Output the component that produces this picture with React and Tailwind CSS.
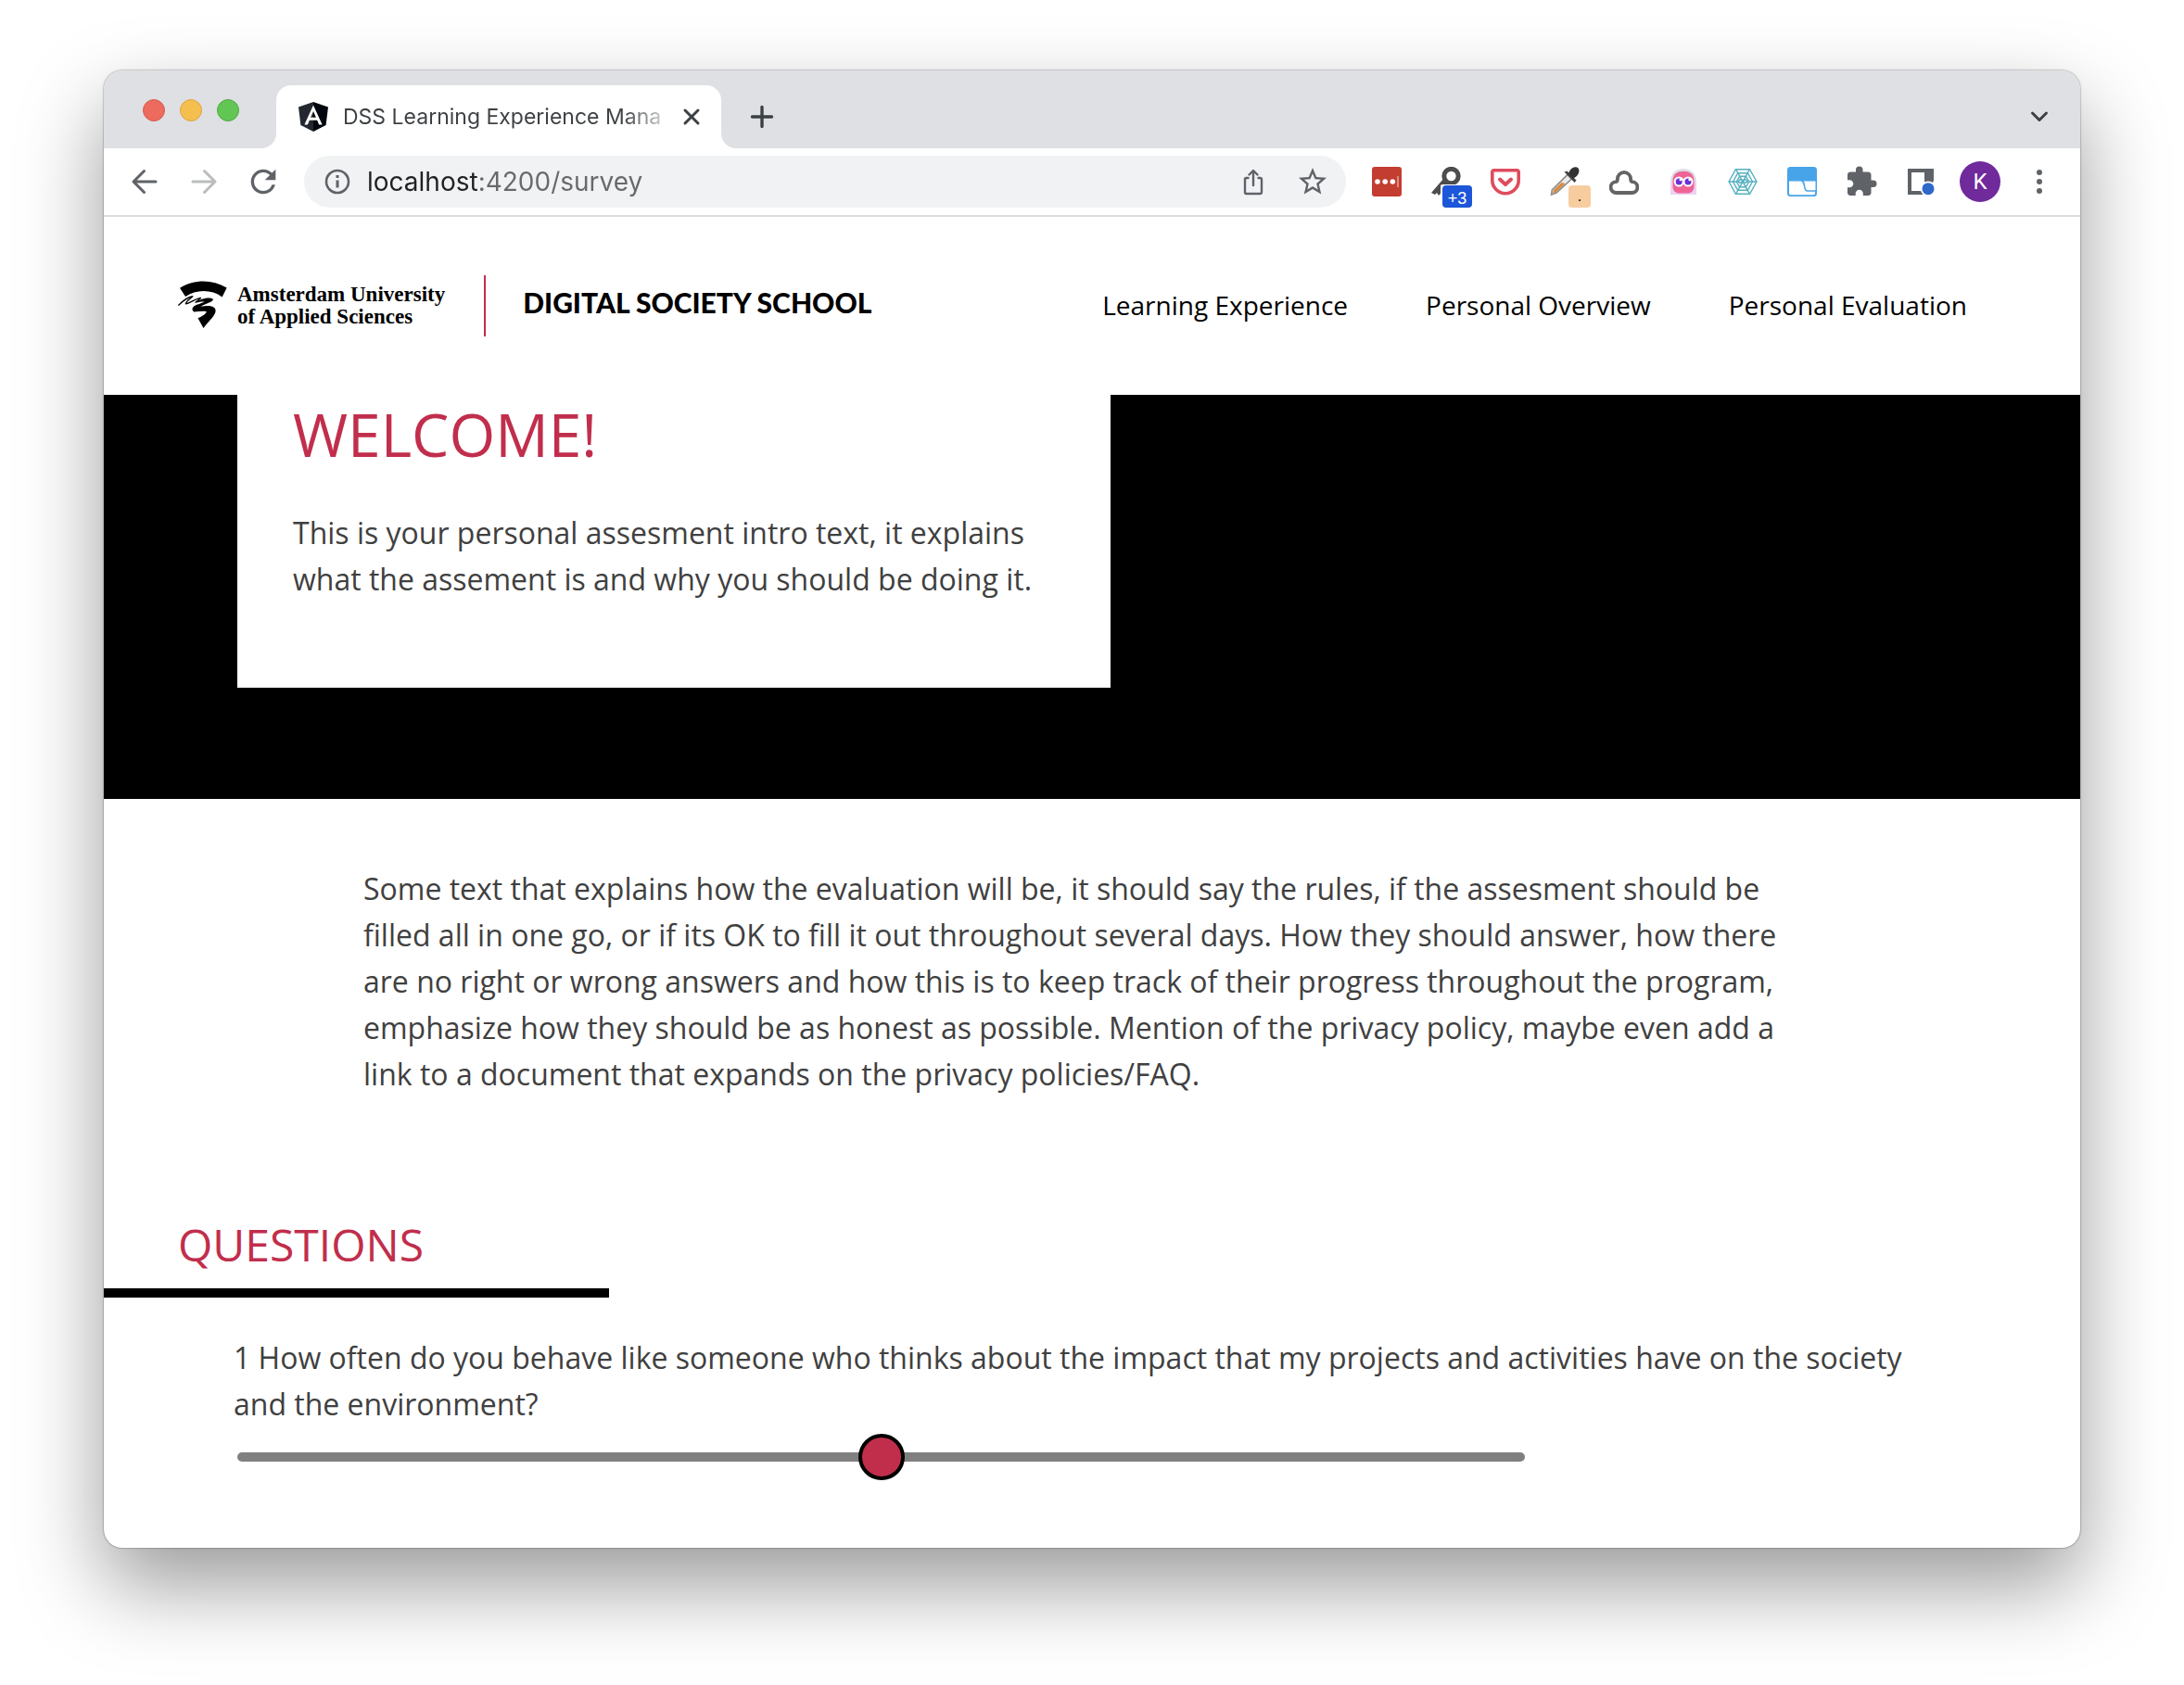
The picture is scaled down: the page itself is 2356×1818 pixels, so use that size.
import { MdExtension, MdRefresh, MdStarBorder } from "react-icons/md";

const line = {
  fill: "none",
  stroke: "currentColor",
  strokeWidth: 3,
  strokeLinecap: "round",
  strokeLinejoin: "round",
};

function Glyph({ children, className = "size-8" }) {
  return (
    <svg viewBox="0 0 32 32" className={className} aria-hidden="true">
      {children}
    </svg>
  );
}

function IconButton({ label, className = "text-[#5f6368]", children }) {
  return (
    <button
      type="button"
      aria-label={label}
      className={`relative flex h-14 w-16 shrink-0 items-center justify-center ${className}`}
    >
      {children}
    </button>
  );
}

function AngularShield() {
  return (
    <svg viewBox="25 30 200 200" className="size-8 shrink-0" aria-hidden="true">
      <path d="M125 30 25 64l15 122 85 44z" fill="#23272f" />
      <path d="M125 30l100 34-15 122-85 44z" fill="#02060e" />
      <path
        d="M125 52 65 183h22l12-30h52l12 30h22zm18 83h-36l18-42z"
        fill="#fff"
      />
    </svg>
  );
}

function TabStrip() {
  return (
    <div className="flex h-[84px] items-end bg-[#dfe0e4]">
      <div className="flex h-[82px] w-[170px] shrink-0 items-center gap-4 pl-[42px]">
        <button type="button" aria-label="Close window" className="size-6 rounded-full border border-[#d55a4f] bg-[#ed6a5f]" />
        <button type="button" aria-label="Minimize window" className="size-6 rounded-full border border-[#dca443] bg-[#f5bf4f]" />
        <button type="button" aria-label="Zoom window" className="size-6 rounded-full border border-[#52a842] bg-[#62c655]" />
      </div>
      <div className="size-4 shrink-0 bg-white">
        <div className="size-4 rounded-br-full bg-[#dfe0e4]" />
      </div>
      <div className="flex h-[68px] w-[480px] items-center rounded-t-2xl bg-white pl-6 pr-4">
        <AngularShield />
        <span className="ml-4 flex-1 whitespace-nowrap bg-[linear-gradient(90deg,#3c4043_84%,transparent)] bg-clip-text font-[Inter,sans-serif] text-[23px] text-transparent">
          DSS Learning Experience Mana
        </span>
        <button type="button" aria-label="Close tab" className="size-8 text-[#3c4043]">
          <Glyph>
            <path d="M9 9l14 14M23 9L9 23" {...line} />
          </Glyph>
        </button>
      </div>
      <div className="size-4 shrink-0 bg-white">
        <div className="size-4 rounded-bl-full bg-[#dfe0e4]" />
      </div>
      <button type="button" aria-label="New tab" className="mb-[18px] ml-3 size-8 text-[#3c4043]">
        <Glyph>
          <path d="M16 5.500v21M5.500 16h21" {...line} strokeWidth={3.4} />
        </Glyph>
      </button>
      <button type="button" aria-label="Search tabs" className="mb-[18px] ml-auto mr-7 size-8 text-[#3c4043]">
        <Glyph>
          <path d="M8.500 12l7.500 7.500 7.500-7.500" {...line} />
        </Glyph>
      </button>
    </div>
  );
}

function Extensions() {
  return (
    <div className="flex shrink-0">
      <IconButton label="Password manager">
        <Glyph>
          <rect width="32" height="32" rx="3" fill="#c33d31" />
          <circle cx="6" cy="16" r="2.800" fill="#fff" />
          <circle cx="14.200" cy="16" r="2.800" fill="#fff" />
          <circle cx="22.300" cy="16" r="2.800" fill="#fff" />
          <path d="M28 10v12" stroke="#e3a49e" strokeWidth="1.500" />
        </Glyph>
      </IconButton>
      <IconButton label="Key finder, 3 new">
        <Glyph>
          <circle cx="21.500" cy="10" r="7.700" fill="none" stroke="#4d4d4d" strokeWidth="5" />
          <path d="M13 13l6 6L8 31l-2-3-2 2-4-2z" fill="#4d4d4d" />
          <path d="M10 32V21a2 2 0 0 1 2-2h20v13z" fill="#fff" />
        </Glyph>
        <span className="absolute left-7 top-8 h-6 w-8 rounded bg-[#1c56d9] text-center font-['Liberation_Sans',sans-serif] text-lg leading-7 text-white">
          +3
        </span>
      </IconButton>
      <IconButton label="Save to Pocket">
        <Glyph>
          <path
            d="M3.500 3.800h25a1.700 1.700 0 0 1 1.700 1.700v9a14.200 14.200 0 0 1-28.400 0v-9a1.700 1.700 0 0 1 1.700-1.700z"
            fill="none" stroke="#de4c5c" strokeWidth="3.600"
          />
          <path d="M10 13.500l6 5.500 6-5.500" fill="none" stroke="#de4c5c" strokeWidth="4" strokeLinecap="round" strokeLinejoin="round" />
        </Glyph>
      </IconButton>
      <IconButton label="Color picker">
        <Glyph>
          <path d="M19 8.500l4.500 4.500L7 28l-5.500 2 .8-5z" fill="#e9e9e9" stroke="#8b8b8b" strokeWidth="1.600" />
          <path d="M12.500 17l4 1L6.500 27.500l-3.500 1 1-3.500z" fill="#d98a3c" />
          <path d="M15.500 5.500l3-1 10 10-2 2.500z" fill="#444" />
          <path d="M20 7c2-5 5-7.500 9-6.500 3 1 3 5 1 8-1.500 2-3 3.500-5.500 4z" fill="#333" />
        </Glyph>
        <span className="absolute left-9 top-8 size-6 rounded bg-[#f7cda0] text-center font-['Liberation_Sans',sans-serif] text-base leading-6 text-black">
          .
        </span>
      </IconButton>
      <IconButton label="Cloud">
        <Glyph>
          <path
            d="M7.800 28a5.900 5.900 0 0 1-.6-11.800c1.200-.2 1.700-1.200 1.700-3.200a7.100 7.100 0 0 1 14.200 0c0 2 .5 3 1.700 3.200a5.900 5.900 0 0 1-.6 11.800z"
            fill="none" stroke="#646464" strokeWidth="3.800"
          />
        </Glyph>
      </IconButton>
      <IconButton label="Ghost">
        <Glyph>
          <path d="M2 30V16C2 7 8 2 16 2s14 5 14 14v14z" fill="#dcdfe6" />
          <path d="M2 16h28v10a4 4 0 0 1-4 4H6a4 4 0 0 1-4-4z" fill="#efd0f3" />
          <path d="M4.500 15C4.500 8 9 4.800 16 4.800S27.500 8 27.500 15v7a6.500 6.500 0 0 1-6.500 6.500H11A6.500 6.500 0 0 1 4.500 22z" fill="#ee6496" />
          <circle cx="11.200" cy="16" r="5.500" fill="#fff" />
          <circle cx="21" cy="16" r="5.500" fill="#fff" />
          <circle cx="11.200" cy="16" r="3.500" fill="#6d2fd6" />
          <circle cx="21" cy="16" r="3.500" fill="#6d2fd6" />
          <circle cx="13" cy="13.800" r="1.500" fill="#fff" />
          <circle cx="22.800" cy="13.800" r="1.500" fill="#fff" />
        </Glyph>
      </IconButton>
      <IconButton label="Web">
        <Glyph>
          <g fill="none" stroke="#55b0bf" strokeWidth="1.400" strokeLinejoin="round">
            <path d="M8.500 2.700h15L31 16l-7.500 13.300h-15L1 16z" />
            <path d="M10.700 6.700h10.600l5.200 9.300-5.200 9.300H10.700L5.500 16z" />
            <path d="M12.500 10.300h7l3.300 5.700-3.300 5.700h-7L9.200 16z" />
            <path d="M8.500 2.700l15 26.600M23.500 2.700l-15 26.600M1 16h11M20 16h11" />
            <circle cx="13.500" cy="15.500" r="1.800" />
            <circle cx="18.500" cy="15.500" r="1.800" />
          </g>
        </Glyph>
      </IconButton>
      <IconButton label="Split window">
        <Glyph>
          <rect width="32" height="32" rx="3.500" fill="#48a4e8" />
          <path d="M2 15.500h12.500c4 0 2.500 10.500 6.500 11.300h9V28.500a1.800 1.800 0 0 1-1.800 1.800H3.800A1.800 1.800 0 0 1 2 28.500z" fill="#fff" />
          <path d="M17.500 15.500H30.500v9.800h-8.300c-3.700 0-2.200-7.500-4.700-9.800z" fill="#fff" />
        </Glyph>
      </IconButton>
      <IconButton label="Extensions">
        <MdExtension className="size-9" />
      </IconButton>
      <IconButton label="Side panel">
        <Glyph>
          <path d="M2 2h28v28H2z" fill="#5f6368" />
          <path d="M6 6h14v20H6z" fill="#fff" />
          <circle cx="24" cy="23.700" r="8.200" fill="#fff" />
          <path d="M30 15h2v17H20v-2z" fill="#fff" />
          <circle cx="24" cy="23.700" r="6.500" fill="#2e68cb" />
        </Glyph>
      </IconButton>
      <IconButton label="Profile K">
        <span className="flex size-11 items-center justify-center rounded-full bg-[#702a9c] font-[Roboto,sans-serif] text-2xl text-white">
          K
        </span>
      </IconButton>
      <IconButton label="Menu">
        <Glyph>
          <circle cx="16" cy="6" r="3" fill="currentColor" />
          <circle cx="16" cy="16" r="3" fill="currentColor" />
          <circle cx="16" cy="26" r="3" fill="currentColor" />
        </Glyph>
      </IconButton>
    </div>
  );
}

function Toolbar() {
  return (
    <div className="flex h-[74px] items-center border-b-2 border-[#dcdcde] bg-white px-3">
      <IconButton label="Back">
        <Glyph>
          <path d="M28 16H5M15.500 4.500L4 16l11.500 11.500" {...line} />
        </Glyph>
      </IconButton>
      <IconButton label="Forward" className="text-[#babcbe]">
        <Glyph>
          <path d="M4 16h23M16.500 4.500L28 16 16.500 27.500" {...line} />
        </Glyph>
      </IconButton>
      <IconButton label="Reload">
        <MdRefresh className="size-10" />
      </IconButton>
      <div className="mx-3 flex h-14 min-w-0 flex-1 items-center rounded-full bg-[#f1f2f4] pl-5 pr-1">
        <Glyph className="size-8 shrink-0 text-[#5f6368]">
          <circle cx="16" cy="16" r="12" {...line} strokeWidth={2.6} />
          <path d="M16 14.500v8M16 9v3" stroke="currentColor" strokeWidth="3" />
        </Glyph>
        <input
          type="text"
          aria-label="Address"
          defaultValue="localhost:4200/survey"
          className="ml-4 min-w-0 flex-1 bg-[linear-gradient(90deg,#202124_120px,#67696c_120px)] bg-clip-text font-[Inter,sans-serif] text-[28px] text-transparent outline-none"
        />
        <IconButton label="Share">
          <Glyph>
            <path d="M10.500 12H8.500a1.500 1.500 0 0 0-1.500 1.500v14A1.500 1.500 0 0 0 8.500 29h15a1.500 1.500 0 0 0 1.500-1.500v-14a1.500 1.500 0 0 0-1.500-1.500h-2M16 20V4.500M11.500 8.500L16 4l4.500 4.500" {...line} strokeWidth={2.4} />
          </Glyph>
        </IconButton>
        <IconButton label="Bookmark">
          <MdStarBorder className="size-9" />
        </IconButton>
      </div>
      <Extensions />
    </div>
  );
}

function UniversityMark() {
  return (
    <svg viewBox="38 36 158 152" className="h-[51px] w-[53px] shrink-0" aria-hidden="true">
      <path d="M44 59C90 30 148 30 195 58l-15 30C146 63 96 63 62 87z" />
      <path
        d="M39 115c14-14 28-26 46-29-8 8-22 16-22 24 16-2 28-16 48-19-4 6-12 9-16 14"
        fill="none" stroke="#000" strokeWidth="4" strokeLinejoin="round"
      />
      <path d="M90 108c18-14 48-22 61-13 2 9-24 13-40 24 24-5 48-3 48 13 0 16-22 32-39 56l-18-32c14-6 26-14 28-21-12-3-26 0-40 1-12-8-4-18 8-23 12-4 20-7 26-10-10-1-22 1-34 5z" />
    </svg>
  );
}

function SiteHeader() {
  return (
    <header className="flex h-48 items-center bg-white pl-20 pr-[122px] text-black">
      <a href="#university" className="flex items-center gap-[11px] pb-1">
        <UniversityMark />
        <span className="whitespace-nowrap pt-1 font-['Liberation_Serif',serif] text-[23px] font-bold leading-6">
          Amsterdam University
          <br />
          of Applied Sciences
        </span>
      </a>
      <div className="ml-[42px] h-[66px] w-0.5 shrink-0 bg-[#c12e4c]" />
      <a href="#school" className="ml-10 whitespace-nowrap pb-2 font-[Lato,sans-serif] text-[30px] font-black">
        DIGITAL SOCIETY SCHOOL
      </a>
      <nav className="ml-auto flex gap-[84px] whitespace-nowrap pb-0.5 text-[28px]">
        <a href="#learning">Learning Experience</a>
        <a href="#overview">Personal Overview</a>
        <a href="#evaluation">Personal Evaluation</a>
      </nav>
    </header>
  );
}

export default function App() {
  return (
    <div className="bg-white px-28 pb-[148px] pt-[76px]">
      <div className="overflow-hidden rounded-[20px] bg-white shadow-[0_0_2px_rgba(0,0,0,0.6),0_40px_90px_rgba(0,0,0,0.4)]">
        <TabStrip />
        <Toolbar />
        <div className="font-['Open_Sans',sans-serif] text-[32px] leading-[50px] text-[#404040]">
          <SiteHeader />
          <main>
            <section className="bg-black px-36 pb-[120px]">
              <div className="w-full max-w-[942px] bg-white px-[60px] pb-[92px]">
                <h1 className="text-[64px] leading-[86px] text-[#c12e4c]">WELCOME!</h1>
                <p className="mt-[38px]">
                  This is your personal assesment intro text, it explains what the assement is and why you
                  should be doing it.
                </p>
              </div>
            </section>
            <p className="px-[280px] pt-[72px]">
              Some text that explains how the evaluation will be, it should say the rules, if the assesment
              should be filled all in one go, or if its OK to fill it out throughout several days. How they
              should answer, how there are no right or wrong answers and how this is to keep track of their
              progress throughout the program, emphasize how they should be as honest as possible. Mention
              of the privacy policy, maybe even add a link to a document that expands on the privacy
              policies/FAQ.
            </p>
            <h2 className="mt-[126px] w-fit border-b-10 border-black pb-3.5 pl-20 pr-[200px] text-5xl leading-[66px] text-[#c12e4c]">
              QUESTIONS
            </h2>
            <form className="px-[140px] pb-[93px] pt-10">
              <label htmlFor="impact" className="block">
                1 How often do you behave like someone who thinks about the impact that my projects and
                activities have on the society and the environment?
              </label>
              <input
                id="impact"
                type="range"
                min="0"
                max="100"
                defaultValue="50"
                className="mx-1 mt-[27px] block h-2.5 w-3/4 appearance-none rounded-[5px] bg-[#808080] [&::-webkit-slider-thumb]:size-[50px] [&::-webkit-slider-thumb]:appearance-none [&::-webkit-slider-thumb]:rounded-full [&::-webkit-slider-thumb]:border-4 [&::-webkit-slider-thumb]:border-black [&::-webkit-slider-thumb]:bg-[#c12e4c]"
              />
            </form>
          </main>
        </div>
      </div>
    </div>
  );
}
